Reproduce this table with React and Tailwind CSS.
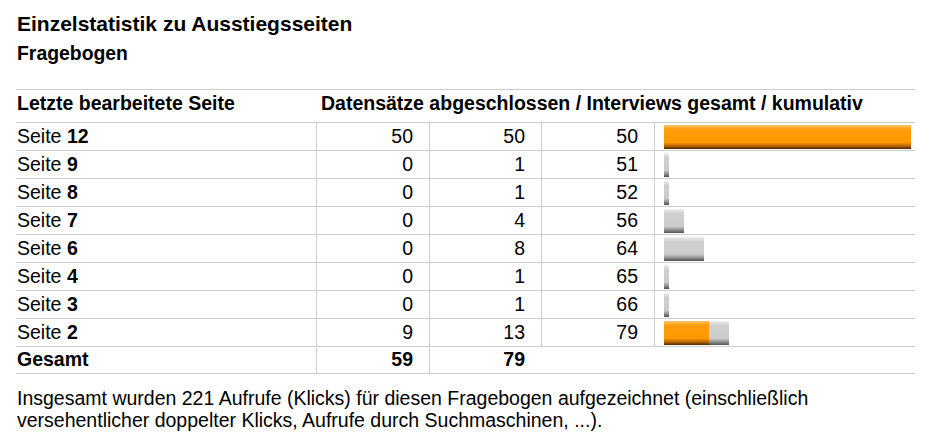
import React from 'react';

const rows = [
  { page: '12', done: 50, total: 50, cum: 50, orange: 247, gray: 0 },
  { page: '9', done: 0, total: 1, cum: 51, orange: 0, gray: 5 },
  { page: '8', done: 0, total: 1, cum: 52, orange: 0, gray: 5 },
  { page: '7', done: 0, total: 4, cum: 56, orange: 0, gray: 20 },
  { page: '6', done: 0, total: 8, cum: 64, orange: 0, gray: 40 },
  { page: '4', done: 0, total: 1, cum: 65, orange: 0, gray: 5 },
  { page: '3', done: 0, total: 1, cum: 66, orange: 0, gray: 5 },
  { page: '2', done: 9, total: 13, cum: 79, orange: 45, gray: 20 },
];

const orangeBar =
  'h-[24px] bg-[linear-gradient(to_bottom,#ffc46b_0%,#ff9d0a_18%,#ff9900_72%,#b36200_88%,#4a2400_100%)]';
const grayBar =
  'h-[24px] bg-[linear-gradient(to_bottom,#ededed_0%,#d0d0d0_18%,#cccccc_72%,#8a8a8a_88%,#4f4f4f_100%)]';

const Row = ({ r }) => (
  <div className="flex h-[28px] border-b border-[#cccccc]">
    <div className="w-[300px] pl-[1px] pt-[2px] leading-[22px]">
      Seite <b>{r.page}</b>
    </div>
    <div className="w-[113px] border-l border-[#cccccc] pr-[16px] pt-[2px] text-right leading-[22px]">{r.done}</div>
    <div className="w-[112px] border-l border-[#cccccc] pr-[16px] pt-[2px] text-right leading-[22px]">{r.total}</div>
    <div className="w-[113px] border-l border-[#cccccc] pr-[16px] pt-[2px] text-right leading-[22px]">{r.cum}</div>
    <div className="flex flex-1 border-l border-[#cccccc] pl-[9px] pt-[2px]">
      {r.orange > 0 && <div className={orangeBar} style={{ width: r.orange }} />}
      {r.gray > 0 && <div className={grayBar} style={{ width: r.gray }} />}
    </div>
  </div>
);

export default function App() {
  return (
    <div className="min-h-[436px] bg-white text-black font-['Liberation_Sans',Arial,sans-serif]">
      <div className="pl-[17px] pt-[12px] text-[21px] font-bold leading-[24px]">
        Einzelstatistik zu Ausstiegsseiten
      </div>
      <div className="mt-[6px] pl-[17px] text-[19.4px] font-bold leading-[22px]">Fragebogen</div>

      <div className="ml-[16px] mt-[25px] w-[899px] border-t border-[#cccccc] text-[19.5px]">
        <div className="flex h-[33px] border-b border-[#cccccc] pt-[2px] font-bold leading-[22px]">
          <div className="w-[300px] pl-[1px]">Letzte bearbeitete Seite</div>
          <div className="flex-1 pl-[5px]">Datensätze abgeschlossen / Interviews gesamt / kumulativ</div>
        </div>

        {rows.map((r) => (
          <Row key={r.page} r={r} />
        ))}

        <div className="flex h-[27px] border-b border-[#cccccc] pt-[1px] font-bold leading-[22px]">
          <div className="w-[300px] pl-[1px]">Gesamt</div>
          <div className="w-[113px] border-l border-[#cccccc] pr-[16px] text-right">59</div>
          <div className="w-[112px] border-l border-[#cccccc] pr-[16px] text-right">79</div>
          <div className="flex-1" />
        </div>
      </div>

      <p className="mt-[13px] pl-[17px] pr-[20px] text-[19.5px] leading-[22px]">
        Insgesamt wurden 221 Aufrufe (Klicks) für diesen Fragebogen aufgezeichnet (einschließlich
        <br />
        versehentlicher doppelter Klicks, Aufrufe durch Suchmaschinen, ...).
      </p>
    </div>
  );
}
